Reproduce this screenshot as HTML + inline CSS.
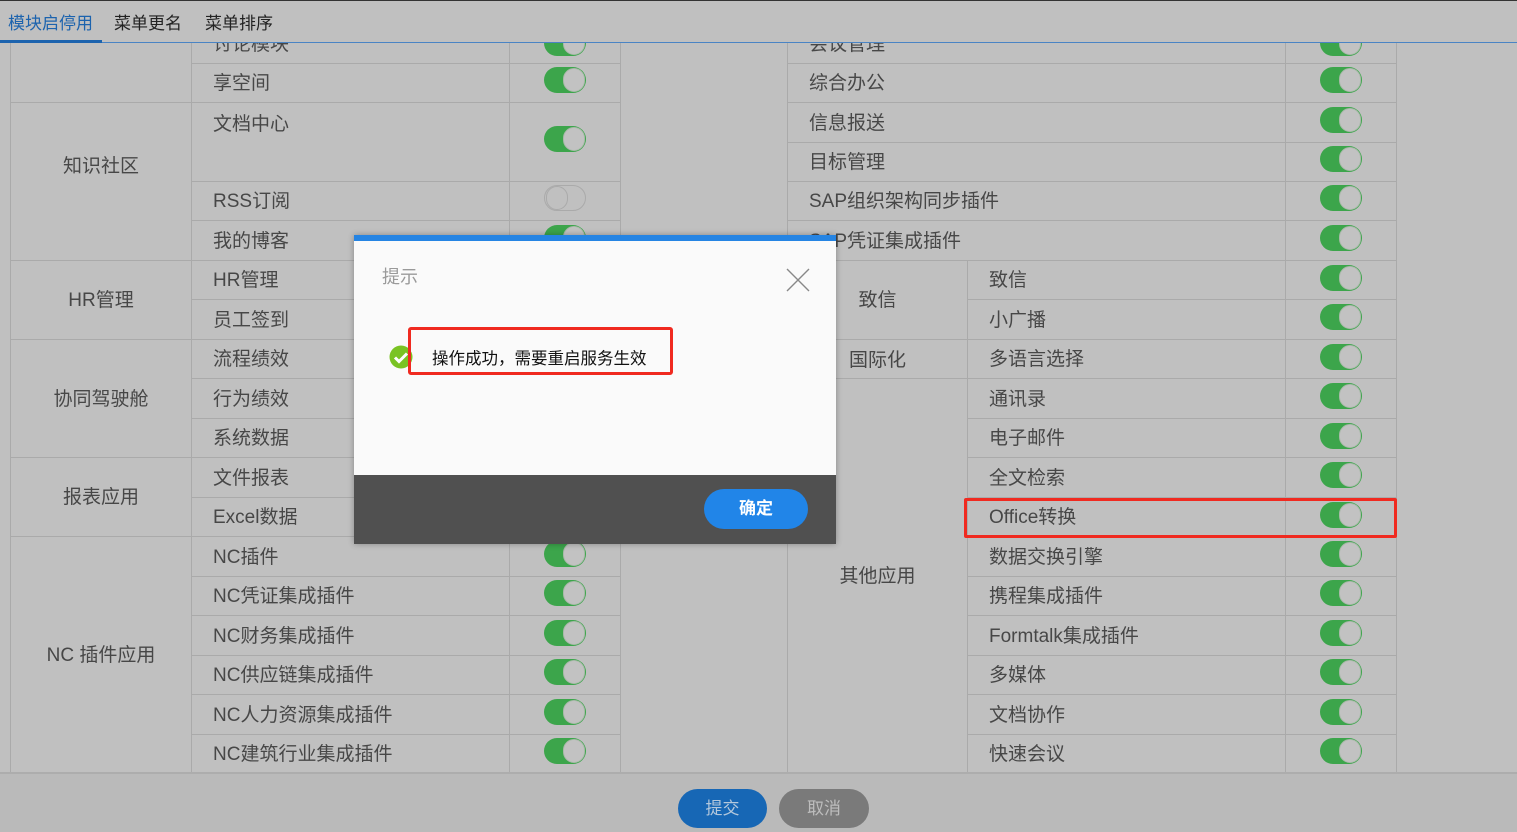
<!DOCTYPE html>
<html><head><meta charset="utf-8"><style>
*{margin:0;padding:0;box-sizing:border-box}
body{width:1517px;height:832px;position:relative;overflow:hidden;background:#bababa;font-family:"Liberation Sans","Noto Sans CJK SC",sans-serif;color:#474747}
#tbl{position:absolute;left:0;top:43px;width:1517px;height:731px;overflow:hidden;background:#c0c0c0;border-bottom:2px solid #adadad}
.c{position:absolute;border:1px solid #aaa;display:flex;align-items:center;font-size:19px;margin-top:-43px;padding-bottom:3px}
.g{justify-content:center}
.n{padding-left:21px}
.t{position:absolute;width:42px;height:26px;border-radius:13px;background:#3ca54b;margin-top:-43px}
.t::after{content:"";position:absolute;right:1px;top:1px;width:22px;height:24px;border-radius:12px;background:#c2c2c2;border:1px solid #a9b9a9;box-sizing:border-box}
.t.off{background:#c0c0c0;border:1px solid #aaa}
.t.off::after{left:1px;right:auto;top:0;width:22px;height:24px;border-color:#aaa;background:#c0c0c0}
#tabs{position:absolute;left:0;top:0;width:1517px;height:43px;background:#c0c0c0;border-top:1px solid #333;border-bottom:1px solid #4a84c4}
#tabs span{position:absolute;top:8px;font-size:17px;color:#222}
</style></head><body>
<div id="tabs">
<span style="left:8px;color:#1c63ae">模块启停用</span>
<span style="left:114px">菜单更名</span>
<span style="left:205px">菜单排序</span>
<div style="position:absolute;left:0;top:39px;width:102px;height:3px;background:#1c63ae"></div>
</div>
<div id="tbl">
<div class="c g" style="left:10px;top:24px;width:182px;height:79px"></div>
<div class="c g" style="left:10px;top:102px;width:182px;height:159px;padding-bottom:35px">知识社区</div>
<div class="c g" style="left:10px;top:260px;width:182px;height:80px">HR管理</div>
<div class="c g" style="left:10px;top:339px;width:182px;height:119px">协同驾驶舱</div>
<div class="c g" style="left:10px;top:457px;width:182px;height:80px">报表应用</div>
<div class="c g" style="left:10px;top:536px;width:182px;height:238px">NC 插件应用</div>
<div class="c n" style="left:191px;top:24px;width:319px;height:40px">讨论模块</div>
<div class="c n" style="left:191px;top:63px;width:319px;height:40px">享空间</div>
<div class="c n" style="left:191px;top:102px;width:319px;height:80px;align-items:flex-start;padding-top:6px">文档中心</div>
<div class="c n" style="left:191px;top:181px;width:319px;height:40px">RSS订阅</div>
<div class="c n" style="left:191px;top:220px;width:319px;height:41px">我的博客</div>
<div class="c n" style="left:191px;top:260px;width:319px;height:40px">HR管理</div>
<div class="c n" style="left:191px;top:299px;width:319px;height:41px">员工签到</div>
<div class="c n" style="left:191px;top:339px;width:319px;height:40px">流程绩效</div>
<div class="c n" style="left:191px;top:378px;width:319px;height:41px">行为绩效</div>
<div class="c n" style="left:191px;top:418px;width:319px;height:40px">系统数据</div>
<div class="c n" style="left:191px;top:457px;width:319px;height:41px">文件报表</div>
<div class="c n" style="left:191px;top:497px;width:319px;height:40px">Excel数据</div>
<div class="c n" style="left:191px;top:536px;width:319px;height:41px">NC插件</div>
<div class="c n" style="left:191px;top:576px;width:319px;height:40px">NC凭证集成插件</div>
<div class="c n" style="left:191px;top:615px;width:319px;height:41px">NC财务集成插件</div>
<div class="c n" style="left:191px;top:655px;width:319px;height:40px">NC供应链集成插件</div>
<div class="c n" style="left:191px;top:694px;width:319px;height:41px">NC人力资源集成插件</div>
<div class="c n" style="left:191px;top:734px;width:319px;height:40px">NC建筑行业集成插件</div>
<div class="c" style="left:509px;top:24px;width:112px;height:40px"></div>
<div class="c" style="left:509px;top:63px;width:112px;height:40px"></div>
<div class="c" style="left:509px;top:102px;width:112px;height:80px"></div>
<div class="c" style="left:509px;top:181px;width:112px;height:40px"></div>
<div class="c" style="left:509px;top:220px;width:112px;height:41px"></div>
<div class="c" style="left:509px;top:260px;width:112px;height:40px"></div>
<div class="c" style="left:509px;top:299px;width:112px;height:41px"></div>
<div class="c" style="left:509px;top:339px;width:112px;height:40px"></div>
<div class="c" style="left:509px;top:378px;width:112px;height:41px"></div>
<div class="c" style="left:509px;top:418px;width:112px;height:40px"></div>
<div class="c" style="left:509px;top:457px;width:112px;height:41px"></div>
<div class="c" style="left:509px;top:497px;width:112px;height:40px"></div>
<div class="c" style="left:509px;top:536px;width:112px;height:41px"></div>
<div class="c" style="left:509px;top:576px;width:112px;height:40px"></div>
<div class="c" style="left:509px;top:615px;width:112px;height:41px"></div>
<div class="c" style="left:509px;top:655px;width:112px;height:40px"></div>
<div class="c" style="left:509px;top:694px;width:112px;height:41px"></div>
<div class="c" style="left:509px;top:734px;width:112px;height:40px"></div>
<div class="t" style="left:544px;top:30px"></div>
<div class="t" style="left:544px;top:67px"></div>
<div class="t" style="left:544px;top:126px"></div>
<div class="t off" style="left:544px;top:185px"></div>
<div class="t" style="left:544px;top:225px"></div>
<div class="t" style="left:544px;top:541px"></div>
<div class="t" style="left:544px;top:580px"></div>
<div class="t" style="left:544px;top:620px"></div>
<div class="t" style="left:544px;top:659px"></div>
<div class="t" style="left:544px;top:699px"></div>
<div class="t" style="left:544px;top:738px"></div>
<div class="c n" style="left:787px;top:24px;width:499px;height:40px">会议管理</div>
<div class="c n" style="left:787px;top:63px;width:499px;height:40px">综合办公</div>
<div class="c n" style="left:787px;top:102px;width:499px;height:41px">信息报送</div>
<div class="c n" style="left:787px;top:142px;width:499px;height:40px">目标管理</div>
<div class="c n" style="left:787px;top:181px;width:499px;height:40px">SAP组织架构同步插件</div>
<div class="c n" style="left:787px;top:220px;width:499px;height:41px">SAP凭证集成插件</div>
<div class="c g" style="left:787px;top:260px;width:181px;height:80px">致信</div>
<div class="c g" style="left:787px;top:339px;width:181px;height:40px;padding-top:2px">国际化</div>
<div class="c g" style="left:787px;top:378px;width:181px;height:396px">其他应用</div>
<div class="c n" style="left:967px;top:260px;width:319px;height:40px">致信</div>
<div class="c n" style="left:967px;top:299px;width:319px;height:41px">小广播</div>
<div class="c n" style="left:967px;top:339px;width:319px;height:40px">多语言选择</div>
<div class="c n" style="left:967px;top:378px;width:319px;height:41px">通讯录</div>
<div class="c n" style="left:967px;top:418px;width:319px;height:40px">电子邮件</div>
<div class="c n" style="left:967px;top:457px;width:319px;height:41px">全文检索</div>
<div class="c n" style="left:967px;top:497px;width:319px;height:40px">Office转换</div>
<div class="c n" style="left:967px;top:536px;width:319px;height:41px">数据交换引擎</div>
<div class="c n" style="left:967px;top:576px;width:319px;height:40px">携程集成插件</div>
<div class="c n" style="left:967px;top:615px;width:319px;height:41px">Formtalk集成插件</div>
<div class="c n" style="left:967px;top:655px;width:319px;height:40px">多媒体</div>
<div class="c n" style="left:967px;top:694px;width:319px;height:41px">文档协作</div>
<div class="c n" style="left:967px;top:734px;width:319px;height:40px">快速会议</div>
<div class="c" style="left:1285px;top:24px;width:112px;height:40px"></div>
<div class="c" style="left:1285px;top:63px;width:112px;height:40px"></div>
<div class="c" style="left:1285px;top:102px;width:112px;height:41px"></div>
<div class="c" style="left:1285px;top:142px;width:112px;height:40px"></div>
<div class="c" style="left:1285px;top:181px;width:112px;height:40px"></div>
<div class="c" style="left:1285px;top:220px;width:112px;height:41px"></div>
<div class="c" style="left:1285px;top:260px;width:112px;height:40px"></div>
<div class="c" style="left:1285px;top:299px;width:112px;height:41px"></div>
<div class="c" style="left:1285px;top:339px;width:112px;height:40px"></div>
<div class="c" style="left:1285px;top:378px;width:112px;height:41px"></div>
<div class="c" style="left:1285px;top:418px;width:112px;height:40px"></div>
<div class="c" style="left:1285px;top:457px;width:112px;height:41px"></div>
<div class="c" style="left:1285px;top:497px;width:112px;height:40px"></div>
<div class="c" style="left:1285px;top:536px;width:112px;height:41px"></div>
<div class="c" style="left:1285px;top:576px;width:112px;height:40px"></div>
<div class="c" style="left:1285px;top:615px;width:112px;height:41px"></div>
<div class="c" style="left:1285px;top:655px;width:112px;height:40px"></div>
<div class="c" style="left:1285px;top:694px;width:112px;height:41px"></div>
<div class="c" style="left:1285px;top:734px;width:112px;height:40px"></div>
<div class="t" style="left:1320px;top:30px"></div>
<div class="t" style="left:1320px;top:67px"></div>
<div class="t" style="left:1320px;top:107px"></div>
<div class="t" style="left:1320px;top:146px"></div>
<div class="t" style="left:1320px;top:185px"></div>
<div class="t" style="left:1320px;top:225px"></div>
<div class="t" style="left:1320px;top:265px"></div>
<div class="t" style="left:1320px;top:304px"></div>
<div class="t" style="left:1320px;top:344px"></div>
<div class="t" style="left:1320px;top:383px"></div>
<div class="t" style="left:1320px;top:423px"></div>
<div class="t" style="left:1320px;top:462px"></div>
<div class="t" style="left:1320px;top:502px"></div>
<div class="t" style="left:1320px;top:541px"></div>
<div class="t" style="left:1320px;top:580px"></div>
<div class="t" style="left:1320px;top:620px"></div>
<div class="t" style="left:1320px;top:659px"></div>
<div class="t" style="left:1320px;top:699px"></div>
<div class="t" style="left:1320px;top:738px"></div>
</div>
<div style="position:absolute;left:964px;top:498px;width:433px;height:40px;border:3px solid #f02a20;border-radius:2px"></div>
<div style="position:absolute;left:678px;top:789px;width:89px;height:39px;border-radius:20px;background:#1767b5;color:#b4c8dc;font-size:17px;text-align:center;line-height:39px">提交</div>
<div style="position:absolute;left:779px;top:789px;width:90px;height:39px;border-radius:20px;background:#7a7a7a;color:#bdbdbd;font-size:17px;text-align:center;line-height:39px">取消</div>
<div style="position:absolute;left:354px;top:235px;width:482px;height:309px;background:#fafafa;box-shadow:0 0 6px rgba(0,0,0,.3)">
<div style="height:6px;background:#2584e3"></div>
<div style="position:absolute;left:28px;top:28px;font-size:18px;color:#9a9a9a">提示</div>
<svg style="position:absolute;left:432px;top:33px" width="24" height="24"><path d="M1 1L23 23M23 1L1 23" stroke="#888" stroke-width="1.4"/></svg>
<svg style="position:absolute;left:35px;top:110px" width="24" height="24"><circle cx="12" cy="12" r="11.5" fill="#7ac323"/><path d="M6 12.5l4 4 8-8" stroke="#fff" stroke-width="3" fill="none"/></svg>
<div style="position:absolute;left:54px;top:92px;width:265px;height:48px;border:3px solid #f02a20;border-radius:3px"></div>
<div style="position:absolute;left:78px;top:110px;font-size:16.5px;color:#111">操作成功，需要重启服务生效</div>
<div style="position:absolute;left:0;top:240px;width:482px;height:69px;background:#505050">
<div style="position:absolute;left:350px;top:14px;width:104px;height:40px;border-radius:20px;background:#2185e8;color:#fff;font-size:17px;font-weight:bold;text-align:center;line-height:40px">确定</div>
</div>
</div>
</body></html>
